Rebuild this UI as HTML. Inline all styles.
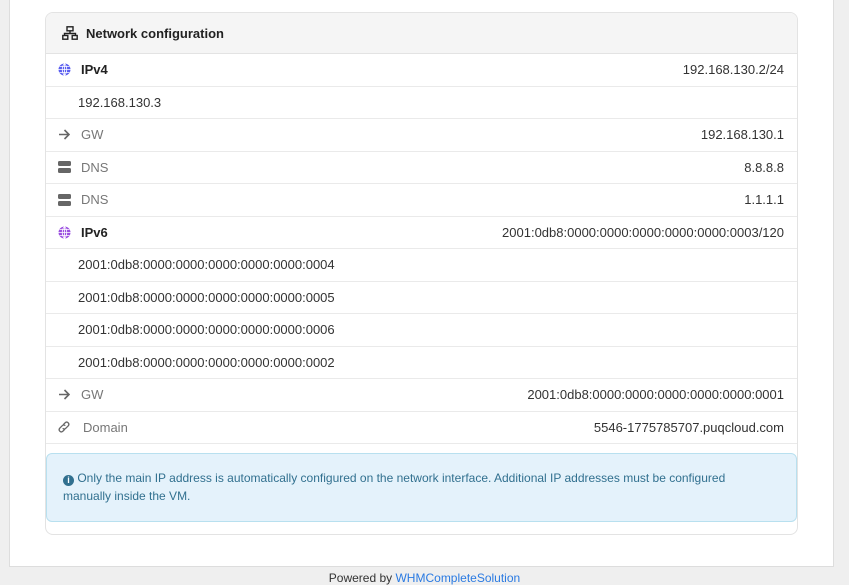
<!DOCTYPE html>
<html><head><style>
*{box-sizing:border-box;margin:0;padding:0}
body{width:849px;height:575px;background:#efefef;font-family:"Liberation Sans",sans-serif;font-size:13px;color:#333;position:relative;overflow:hidden}
.panel{position:absolute;left:9px;top:-5px;width:825px;height:572px;background:#fff;border:1px solid #ddd}
.card{position:absolute;left:45px;top:12px;width:753px;height:523px;border:1px solid #e3e3e3;border-radius:8px;background:#fff;overflow:hidden}
.hdr{height:41px;background:#f5f5f5;border-bottom:1px solid #e3e3e3;display:flex;align-items:center;padding-left:16px;font-weight:bold;font-size:13px;color:#222}
.row{height:32.5px;border-bottom:1px solid #eaeaea;display:flex;align-items:center;justify-content:space-between;padding:0 13px 0 11px}
.l{display:flex;align-items:center}
.ic{width:14px;height:14px;margin-right:10px;display:inline-flex;align-items:center;justify-content:center}
.lab{color:#777}
.b{font-weight:bold;color:#222}
.sub{padding-left:32px}
.alert{position:absolute;left:0px;top:440px;width:751px;height:69px;background:#e4f2fb;border:1px solid #b8e0ef;border-radius:6px;padding:15px 16px;color:#31708f;font-size:12px;line-height:18px}
.foot{position:absolute;top:571px;left:0;width:849px;text-align:center;font-size:12px;color:#333}
.foot a{color:#2a7ae2}
</style></head><body>
<div class="panel"></div>
<div class="card">
<div class="hdr"><svg width="16" height="14" viewBox="0 0 16 14" style="margin-right:8px"><rect x="5" y="0.8" width="6" height="4" fill="none" stroke="#222" stroke-width="1.4"/><path d="M8 5v2.5M2.5 9.5V7.5h11v2" fill="none" stroke="#222" stroke-width="1.4"/><rect x="0.8" y="9.5" width="5" height="3.7" fill="none" stroke="#222" stroke-width="1.4"/><rect x="10.2" y="9.5" width="5" height="3.7" fill="none" stroke="#222" stroke-width="1.4"/></svg>Network configuration</div>
<div class="row"><span class="l"><span class="ic"><svg width="13" height="13" viewBox="0 0 13 13"><circle cx="6.5" cy="6.5" r="6" fill="#5a5ef0"/><path d="M0.5 6.5h12M6.5 0.5v12M1.5 3.5h10M1.5 9.5h10M6.5 .5c-3 3-3 9 0 12M6.5 .5c3 3 3 9 0 12" stroke="#fff" stroke-width=".8" fill="none"/></svg></span><span class="b">IPv4</span></span><span>192.168.130.2/24</span></div>
<div class="row sub">192.168.130.3</div>
<div class="row"><span class="l"><span class="ic"><svg width="12" height="11" viewBox="0 0 12 11"><path d="M1 5.5h10M6.5 1l4.5 4.5L6.5 10" fill="none" stroke="#666" stroke-width="1.6"/></svg></span><span class="lab">GW</span></span><span>192.168.130.1</span></div>
<div class="row"><span class="l"><span class="ic"><svg width="13" height="12"><rect y="0" width="13" height="5" rx="1.5" fill="#666"/><rect y="7" width="13" height="5" rx="1.5" fill="#666"/></svg></span><span class="lab">DNS</span></span><span>8.8.8.8</span></div>
<div class="row"><span class="l"><span class="ic"><svg width="13" height="12"><rect y="0" width="13" height="5" rx="1.5" fill="#666"/><rect y="7" width="13" height="5" rx="1.5" fill="#666"/></svg></span><span class="lab">DNS</span></span><span>1.1.1.1</span></div>
<div class="row"><span class="l"><span class="ic"><svg width="13" height="13" viewBox="0 0 13 13"><circle cx="6.5" cy="6.5" r="6" fill="#9b4fe0"/><path d="M0.5 6.5h12M6.5 0.5v12M1.5 3.5h10M1.5 9.5h10M6.5 .5c-3 3-3 9 0 12M6.5 .5c3 3 3 9 0 12" stroke="#fff" stroke-width=".8" fill="none"/></svg></span><span class="b">IPv6</span></span><span>2001:0db8:0000:0000:0000:0000:0000:0003/120</span></div>
<div class="row sub">2001:0db8:0000:0000:0000:0000:0000:0004</div>
<div class="row sub">2001:0db8:0000:0000:0000:0000:0000:0005</div>
<div class="row sub">2001:0db8:0000:0000:0000:0000:0000:0006</div>
<div class="row sub">2001:0db8:0000:0000:0000:0000:0000:0002</div>
<div class="row"><span class="l"><span class="ic"><svg width="12" height="11" viewBox="0 0 12 11"><path d="M1 5.5h10M6.5 1l4.5 4.5L6.5 10" fill="none" stroke="#666" stroke-width="1.6"/></svg></span><span class="lab">GW</span></span><span>2001:0db8:0000:0000:0000:0000:0000:0001</span></div>
<div class="row"><span class="l"><span class="ic" style="margin-right:12px"><svg width="16" height="14" viewBox="0 0 16 14"><path d="M7 4.5l2.5-2.5a2.5 2.5 0 0 1 3.5 3.5l-3 3a2.5 2.5 0 0 1-3.5 0M9 9.5l-2.5 2.5a2.5 2.5 0 0 1-3.5-3.5l3-3a2.5 2.5 0 0 1 3.5 0" fill="none" stroke="#666" stroke-width="1.5"/></svg></span><span class="lab">Domain</span></span><span>5546-1775785707.puqcloud.com</span></div>
<div class="alert"><span style="display:inline-block;width:11px;height:11px;border-radius:50%;background:#31708f;color:#fff;font-size:9px;line-height:11px;text-align:center;font-weight:bold;vertical-align:-1px">i</span> Only the main IP address is automatically configured on the network interface. Additional IP addresses must be configured<br>manually inside the VM.</div>
</div>
<div class="foot">Powered by <a>WHMCompleteSolution</a></div>
</body></html>
